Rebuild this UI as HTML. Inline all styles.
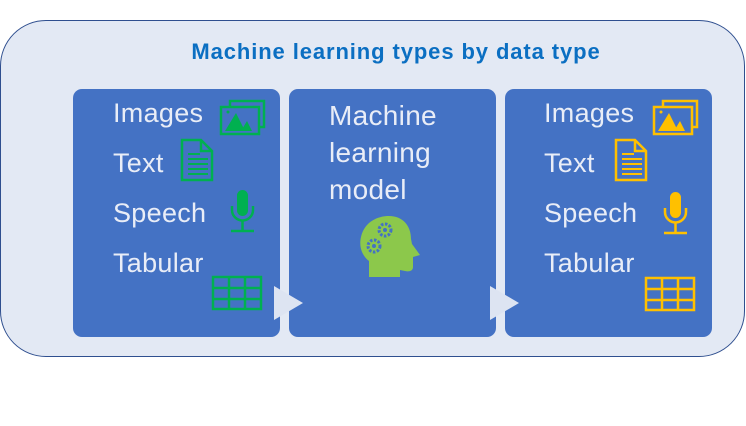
<!DOCTYPE html>
<html><head><style>
body{margin:0;width:746px;height:426px;background:#fff;position:relative;overflow:hidden;font-family:"Liberation Sans",sans-serif}
.outer{position:absolute;left:0px;top:20px;width:745px;height:337px;border:1px solid #2f4f8f;border-radius:46px;background:#e3e9f4;box-sizing:border-box}
.title{position:absolute;left:0;width:792px;top:39px;text-align:center;color:#0b6fc2;font-weight:bold;font-size:22px;letter-spacing:0.9px}
.box{position:absolute;top:89px;width:207px;height:248px;background:#4472c4;border-radius:9px}
.t{position:absolute;color:#e9edf7;font-size:27px;line-height:27px;letter-spacing:0.3px}
svg{position:absolute}
.tri{position:absolute;width:0;height:0;border-top:17px solid transparent;border-bottom:17px solid transparent;border-left:29px solid #dde4f2}
</style></head><body>
<div class="outer"></div>
<div class="title">Machine learning types by data type</div>
<div class="box" style="left:73px"></div>
<div class="box" style="left:289px"></div>
<div class="box" style="left:505px"></div>
<div class="tri" style="left:274px;top:286px"></div>
<div class="tri" style="left:490px;top:286px"></div>

<div class="t" style="left:113px;top:100px">Images</div>
<div class="t" style="left:113px;top:150px">Text</div>
<div class="t" style="left:113px;top:200px">Speech</div>
<div class="t" style="left:113px;top:250px">Tabular</div>

<div class="t" style="left:329px;top:97px;line-height:37px;font-size:28px">Machine<br>learning<br>model</div>

<div class="t" style="left:544px;top:100px">Images</div>
<div class="t" style="left:544px;top:150px">Text</div>
<div class="t" style="left:544px;top:200px">Speech</div>
<div class="t" style="left:544px;top:250px">Tabular</div>

<svg style="left:219px;top:99px" width="48" height="40" viewBox="0 0 48 40"><g fill="none" stroke="#00b050" stroke-width="2.5"><rect x="11" y="2" width="34" height="26"/><rect x="2" y="8" width="38" height="27" fill="#4472c4"/></g><path d="M6 32 L17 14 L26 32Z M22 32 L28 22 L33 32Z" fill="#00b050"/><circle cx="9" cy="13" r="1.5" fill="#00b050"/></svg>
<svg style="left:180px;top:138px" width="34" height="44" viewBox="0 0 34 44"><path d="M2 2 H21 L32 13 V42 H2Z M21 2 V13 H32" fill="none" stroke="#00b050" stroke-width="2.5"/><path d="M8 16h12M8 21h20M8 26h20M8 31h20M8 36h20" stroke="#00b050" stroke-width="2"/></svg>
<svg style="left:229px;top:188px" width="28" height="46" viewBox="0 0 28 46"><rect x="8" y="2" width="11" height="26" rx="5.5" fill="#00b050"/><path d="M3 18 V22 A10.5 10.5 0 0 0 24 22 V18 M13.5 33 V43 M2 43 H25" fill="none" stroke="#00b050" stroke-width="2.5"/></svg>
<svg style="left:211px;top:275px" width="52" height="36" viewBox="0 0 52 36"><g fill="none" stroke="#00b050" stroke-width="2.5"><rect x="2" y="2" width="48" height="32"/><path d="M2 13H50M2 24H50M18 2V34M34 2V34"/></g></svg>

<svg style="left:652px;top:99px" width="48" height="40" viewBox="0 0 48 40"><g fill="none" stroke="#ffc000" stroke-width="2.5"><rect x="11" y="2" width="34" height="26"/><rect x="2" y="8" width="38" height="27" fill="#4472c4"/></g><path d="M6 32 L17 14 L26 32Z M22 32 L28 22 L33 32Z" fill="#ffc000"/><circle cx="9" cy="13" r="1.5" fill="#ffc000"/></svg>
<svg style="left:614px;top:138px" width="34" height="44" viewBox="0 0 34 44"><path d="M2 2 H21 L32 13 V42 H2Z M21 2 V13 H32" fill="none" stroke="#ffc000" stroke-width="2.5"/><path d="M8 16h12M8 21h20M8 26h20M8 31h20M8 36h20" stroke="#ffc000" stroke-width="2"/></svg>
<svg style="left:662px;top:190px" width="28" height="46" viewBox="0 0 28 46"><rect x="8" y="2" width="11" height="26" rx="5.5" fill="#ffc000"/><path d="M3 18 V22 A10.5 10.5 0 0 0 24 22 V18 M13.5 33 V43 M2 43 H25" fill="none" stroke="#ffc000" stroke-width="2.5"/></svg>
<svg style="left:644px;top:276px" width="52" height="36" viewBox="0 0 52 36"><g fill="none" stroke="#ffc000" stroke-width="2.5"><rect x="2" y="2" width="48" height="32"/><path d="M2 13H50M2 24H50M18 2V34M34 2V34"/></g></svg>

<svg style="left:359px;top:215px" width="64" height="63" viewBox="0 0 64 63">
<path d="M10 62 V46 C2 40 0 30 2 22 C5 8 17 1 30 1 C44 1 52 11 52 24 L53 29 L61 40 L54 42 V52 C54 56 50 57 46 56 L41 55 V62Z" fill="#8cc84b"/>
<circle cx="26" cy="15" r="6" fill="none" stroke="#4472c4" stroke-width="3" stroke-dasharray="2.5 1.5"/><circle cx="26" cy="15" r="2" fill="#4472c4"/>
<circle cx="15" cy="31" r="6" fill="none" stroke="#4472c4" stroke-width="3" stroke-dasharray="2.5 1.5"/><circle cx="15" cy="31" r="2" fill="#4472c4"/>
</svg>
</body></html>
